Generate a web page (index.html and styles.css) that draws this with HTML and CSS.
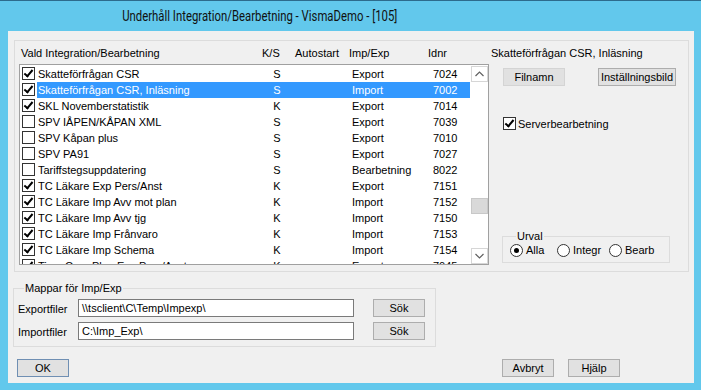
FILE: index.html
```html
<!DOCTYPE html>
<html>
<head>
    <title>Underhåll Integration/Bearbetning</title>
    <link rel="stylesheet" href="styles.css">
</head>
<body>
<div class="window">
    <div class="titlebar"><span class="title_text">Underhåll Integration/Bearbetning - VismaDemo - [105]</span></div>
    <div class="client">
        <div class="main_group">
            <div class="left_part">
                <div class="list_head">
                    <span>Vald Integration/Bearbetning</span>
                    <span>K/S</span>
                    <span>Autostart</span>
                    <span>Imp/Exp</span>
                    <span>Idnr</span>
                </div>
                <div class="list">
                    <div class="rows">
                        <div class="row"><span class="cb on"></span><div class="cells"><span>Skatteförfrågan CSR</span><span class="ks">S</span><span></span><span>Export</span><span>7024</span></div></div>
                        <div class="row sel"><span class="cb on"></span><div class="cells"><span>Skatteförfrågan CSR, Inläsning</span><span class="ks">S</span><span></span><span>Import</span><span>7002</span></div></div>
                        <div class="row"><span class="cb on"></span><div class="cells"><span>SKL Novemberstatistik</span><span class="ks">K</span><span></span><span>Export</span><span>7014</span></div></div>
                        <div class="row"><span class="cb"></span><div class="cells"><span>SPV IÅPEN/KÅPAN XML</span><span class="ks">S</span><span></span><span>Export</span><span>7039</span></div></div>
                        <div class="row"><span class="cb"></span><div class="cells"><span>SPV Kåpan plus</span><span class="ks">S</span><span></span><span>Export</span><span>7010</span></div></div>
                        <div class="row"><span class="cb"></span><div class="cells"><span>SPV PA91</span><span class="ks">S</span><span></span><span>Export</span><span>7027</span></div></div>
                        <div class="row"><span class="cb"></span><div class="cells"><span>Tariffstegsuppdatering</span><span class="ks">S</span><span></span><span>Bearbetning</span><span>8022</span></div></div>
                        <div class="row"><span class="cb on"></span><div class="cells"><span>TC Läkare Exp Pers/Anst</span><span class="ks">K</span><span></span><span>Export</span><span>7151</span></div></div>
                        <div class="row"><span class="cb on"></span><div class="cells"><span>TC Läkare Imp Avv mot plan</span><span class="ks">K</span><span></span><span>Import</span><span>7152</span></div></div>
                        <div class="row"><span class="cb on"></span><div class="cells"><span>TC Läkare Imp Avv tjg</span><span class="ks">K</span><span></span><span>Import</span><span>7150</span></div></div>
                        <div class="row"><span class="cb on"></span><div class="cells"><span>TC Läkare Imp Frånvaro</span><span class="ks">K</span><span></span><span>Import</span><span>7153</span></div></div>
                        <div class="row"><span class="cb on"></span><div class="cells"><span>TC Läkare Imp Schema</span><span class="ks">K</span><span></span><span>Import</span><span>7154</span></div></div>
                        <div class="row"><span class="cb on"></span><div class="cells"><span>Time Care Plan Exp Pers/Anst</span><span class="ks">K</span><span></span><span>Export</span><span>7045</span></div></div>
                    </div>
                    <div class="scrollbar">
                        <div class="arrow"><svg width="9" height="6" viewBox="0 0 9 6"><path d="M0.5 5 L4.5 1 L8.5 5" fill="none" stroke="#606060" stroke-width="1.2"/></svg></div>
                        <div class="track"><div class="thumb"></div></div>
                        <div class="arrow"><svg width="9" height="6" viewBox="0 0 9 6"><path d="M0.5 1 L4.5 5 L8.5 1" fill="none" stroke="#606060" stroke-width="1.2"/></svg></div>
                    </div>
                </div>
            </div>
            <div class="right_part">
                <div class="sel_name">Skatteförfrågan CSR, Inläsning</div>
                <div class="btn_row">
                    <button class="btn flat w62">Filnamn</button>
                    <button class="btn w78">Inställningsbild</button>
                </div>
                <label class="server"><span class="cb on"></span>Serverbearbetning</label>
                <fieldset class="urval">
                    <legend>Urval</legend>
                    <label class="w47"><span class="radio on"></span>Alla</label>
                    <label class="w52"><span class="radio"></span>Integr</label>
                    <label><span class="radio"></span>Bearb</label>
                </fieldset>
            </div>
        </div>
        <fieldset class="mappar">
            <legend>Mappar för Imp/Exp</legend>
            <div class="path_row">
                <span class="path_label">Exportfiler</span>
                <div class="input">\\tsclient\C\Temp\Impexp\</div>
                <button class="btn w52">Sök</button>
            </div>
            <div class="path_row">
                <span class="path_label">Importfiler</span>
                <div class="input">C:\Imp_Exp\</div>
                <button class="btn w52">Sök</button>
            </div>
        </fieldset>
        <div class="bottom_row">
            <button class="btn default w52">OK</button>
            <div class="spacer"></div>
            <button class="btn w52">Avbryt</button>
            <button class="btn w52">Hjälp</button>
        </div>
    </div>
</div>
</body>
</html>
```

FILE: styles.css
```css
BODY {
    margin: 0;
    background-color: #62c8ec;
    font-family: "Liberation Sans", arial, sans-serif;
    font-size: 11px;
    color: #000;
}

.window {
    width: 701px;
    height: 390px;
    display: flex;
    flex-direction: column;
    border-top: 1px solid #2d6b8c;
    box-sizing: border-box;
    overflow: hidden;
}

.titlebar {
    height: 30px;
    display: flex;
    align-items: center;
    justify-content: center;
    padding-right: 181px;
    font-family: Roboto, sans-serif;
    font-size: 14px;
    color: #111;
}

.title_text {
    display: inline-block;
    white-space: nowrap;
    transform: scaleX(0.81);
}

.client {
    margin: 0 7px 7px 8px;
    flex: 1;
    background-color: #f0f0f0;
    padding: 9px 0 0 6px;
    display: flex;
    flex-direction: column;
}

/* main group */
.main_group {
    width: 675px;
    height: 232px;
    box-sizing: border-box;
    border: 1px solid #dcdcdc;
    display: flex;
}

.left_part {
    padding: 6px 0 0 4px;
}

.list_head {
    display: grid;
    grid-template-columns: 241px 33px 54px 79px auto;
    padding-left: 2px;
    height: 17px;
    line-height: 13px;
}

.list {
    width: 470px;
    height: 201px;
    box-sizing: border-box;
    border: 1px solid #a0a0a0;
    background: #fff;
    padding: 1px 0 0 1px;
    display: flex;
    overflow: hidden;
}

.rows {
    width: 450px;
    overflow: hidden;
}

.row {
    display: flex;
    height: 16px;
    line-height: 16px;
}

.row .cb {
    margin: 1px 2px 0 1px;
}

.cells {
    display: grid;
    grid-template-columns: 232px 14px 68px 81px 30px;
    flex: 1;
    padding-left: 1px;
    white-space: nowrap;
}

.cells .ks {
    text-align: center;
}

.row.sel .cells {
    background-color: #3399ff;
    color: #fff;
}

.cb {
    display: inline-block;
    width: 13px;
    height: 13px;
    box-sizing: border-box;
    border: 1px solid #333;
    background: #fff;
    position: relative;
    flex-shrink: 0;
}

.cb.on::after {
    content: "";
    position: absolute;
    left: 3px;
    top: 0px;
    width: 3px;
    height: 7px;
    border: solid #000;
    border-width: 0 2px 2px 0;
    transform: rotate(40deg);
}

.scrollbar {
    width: 17px;
    margin-left: 1px;
    display: flex;
    flex-direction: column;
    background: #f0f0f0;
}

.arrow {
    height: 16px;
    border: 1px solid #d6d6d6;
    box-sizing: border-box;
    background: #fff;
    display: flex;
    align-items: center;
    justify-content: center;
}

.track {
    flex: 1;
    position: relative;
    background: #fff;
}

.thumb {
    position: absolute;
    left: 0;
    right: 0;
    top: 116px;
    height: 16px;
    background: #d9d9d9;
    border: 1px solid #c8c8c8;
    box-sizing: border-box;
}

/* right part */
.right_part {
    padding: 6px 0 0 2px;
    flex: 1;
}

.sel_name {
    height: 14px;
    line-height: 13px;
}

.btn_row {
    display: flex;
    margin: 7px 0 0 12px;
    gap: 33px;
}

.btn {
    height: 18px;
    font-family: "Liberation Sans", arial, sans-serif;
    font-size: 11px;
    background: #e1e1e1;
    border: 1px solid #adadad;
    padding: 0;
    color: #000;
}

.btn.flat {
    border-color: #d4d4d4;
}

.btn.default {
    border-color: #6f8fb3;
}

.w47 { width: 47px; }
.w52 { width: 52px; }
.w62 { width: 62px; }
.w78 { width: 78px; }

.server {
    display: flex;
    align-items: center;
    gap: 2px;
    margin: 31px 0 0 12px;
}

fieldset {
    margin: 0;
    border: 1px solid #dcdcdc;
    padding: 0;
}

legend {
    padding: 0 1px;
    margin-left: 6px;
    line-height: 12px;
}

.urval {
    width: 168px;
    height: 33px;
    box-sizing: border-box;
    margin: 100px 0 0 11px;
    display: flex;
    padding: 1px 0 0 7px;
}

.urval label {
    display: flex;
    align-items: center;
    gap: 3px;
    height: 14px;
    flex-shrink: 0;
}

.radio {
    display: inline-block;
    width: 13px;
    height: 13px;
    box-sizing: border-box;
    border: 1px solid #333;
    border-radius: 50%;
    background: #fff;
    position: relative;
}

.radio.on::after {
    content: "";
    position: absolute;
    left: 3px;
    top: 3px;
    width: 5px;
    height: 5px;
    border-radius: 50%;
    background: #000;
}

/* folders */
.mappar {
    width: 423px;
    height: 65px;
    box-sizing: border-box;
    margin: 10px 0 0 -1px;
    padding: 2px 0 0 4px;
}

.path_row {
    display: flex;
    align-items: center;
    height: 23px;
}

.path_label {
    width: 60px;
    padding-top: 3px;
}

.input {
    width: 276px;
    height: 18px;
    box-sizing: border-box;
    border: 1px solid #7a7a7a;
    background: #fff;
    padding: 0 3px;
    line-height: 16px;
}

.path_row .btn {
    margin-left: 19px;
}

.bottom_row {
    display: flex;
    margin-top: 12px;
    padding-left: 3px;
    padding-right: 74px;
    gap: 14px;
}

.spacer {
    flex: 1;
}
```
